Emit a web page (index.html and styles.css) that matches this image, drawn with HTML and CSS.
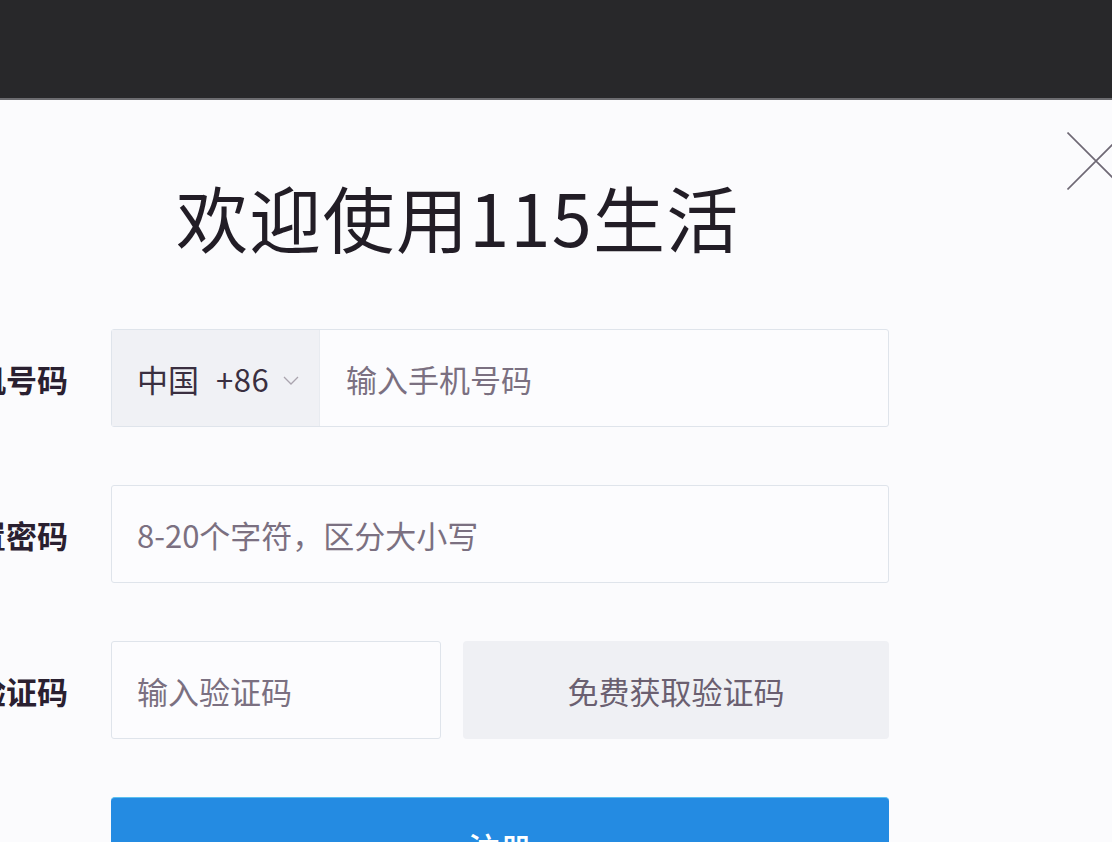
FILE: index.html
```html
<!DOCTYPE html>
<html lang="zh-CN">
<head>
<meta charset="utf-8">
<title>欢迎使用115生活</title>
<link rel="stylesheet" href="styles.css">
</head>
<body>
<div class="topbar"></div>
<div class="modal">
  <svg class="close" width="58" height="58" viewBox="0 0 58 58" aria-label="关闭">
    <path d="M0.5 0.5 L57.5 57.5 M57.5 0.5 L0.5 57.5" stroke="#6e6874" stroke-width="1.6" fill="none"/>
  </svg>
  <h1 class="title">欢迎使用115生活</h1>
  <form class="form">
    <div class="row">
      <label class="label">手机号码</label>
      <div class="field phone">
        <div class="country"><span class="cc">中国</span><span class="code-num">+86</span><svg class="chev" width="16" height="9" viewBox="0 0 16 9"><path d="M1 1 L8 8 L15 1" stroke="#aaa4ae" stroke-width="1.3" fill="none"/></svg></div>
        <div class="ph">输入手机号码</div>
      </div>
    </div>
    <div class="row">
      <label class="label">设置密码</label>
      <div class="field">
        <div class="ph">8-20个字符，区分大小写</div>
      </div>
    </div>
    <div class="row">
      <label class="label">验证码</label>
      <div class="split">
        <div class="field code">
          <div class="ph">输入验证码</div>
        </div>
        <div class="getcode">免费获取验证码</div>
      </div>
    </div>
    <div class="row">
      <span class="label"></span>
      <div class="submit">注册</div>
    </div>
  </form>
</div>
</body>
</html>
```

FILE: styles.css
```css
html, body {
  margin: 0;
  padding: 0;
  height: 100%;
  overflow: hidden;
  background: #fbfbfd;
  font-family: "Noto Sans CJK SC", "Noto Sans", sans-serif;
}

.topbar {
  height: 98px;
  background: #28282a;
  border-bottom: 2px solid #6c6c70;
}

.modal {
  position: relative;
  padding-top: 80px;
  background: #fbfbfd;
  height: 742px;
  box-sizing: border-box;
  overflow: hidden;
}

.close {
  position: absolute;
  top: 32px;
  right: -13px;
}

.title {
  margin: 0 0 0 176px;
  font-size: 72px;
  line-height: 72px;
  font-weight: 400;
  color: #221d26;
  letter-spacing: 1.3px;
}

.form {
  margin-top: 77px;
  display: flex;
  flex-direction: column;
  gap: 58px;
}

.row {
  display: flex;
  align-items: center;
  gap: 43px;
  height: 98px;
  flex: none;
}

.label {
  width: 68px;
  flex: none;
  display: flex;
  justify-content: flex-end;
  white-space: nowrap;
  font-size: 31px;
  font-weight: 700;
  color: #2a2030;
}

.field {
  width: 778px;
  height: 98px;
  box-sizing: border-box;
  border: 1px solid #dfe4eb;
  border-radius: 3px;
  background: #fcfcfe;
  display: flex;
  align-items: center;
}

.ph {
  padding-left: 25px;
  font-size: 31px;
  color: #7b7081;
  white-space: nowrap;
}

.phone .ph {
  padding-left: 26px;
}

.country {
  width: 208px;
  height: 100%;
  flex: none;
  box-sizing: border-box;
  background: #f0f1f5;
  border-right: 1px solid #e8ebf0;
  display: flex;
  align-items: center;
  padding-left: 25px;
  font-size: 31px;
  color: #3a2f40;
}

.cc,
.code-num {
  white-space: nowrap;
}

.code-num {
  margin-left: 17px;
  letter-spacing: 0.5px;
}

.chev {
  flex: none;
  margin-left: 14px;
  margin-top: 4px;
}

.split {
  display: flex;
  gap: 22px;
  width: 778px;
}

.field.code {
  width: 330px;
}

.getcode {
  width: 426px;
  height: 98px;
  background: #eff0f4;
  border-radius: 4px;
  display: flex;
  align-items: center;
  justify-content: center;
  font-size: 31px;
  color: #6a5f70;
}

.submit {
  width: 778px;
  height: 98px;
  background: #248be2;
  border-top: 1px solid #5bc0f0;
  box-sizing: border-box;
  border-radius: 4px;
  display: flex;
  align-items: center;
  justify-content: center;
  color: #ffffff;
  font-size: 32px;
  font-weight: 500;
  align-self: flex-start;
}
```
